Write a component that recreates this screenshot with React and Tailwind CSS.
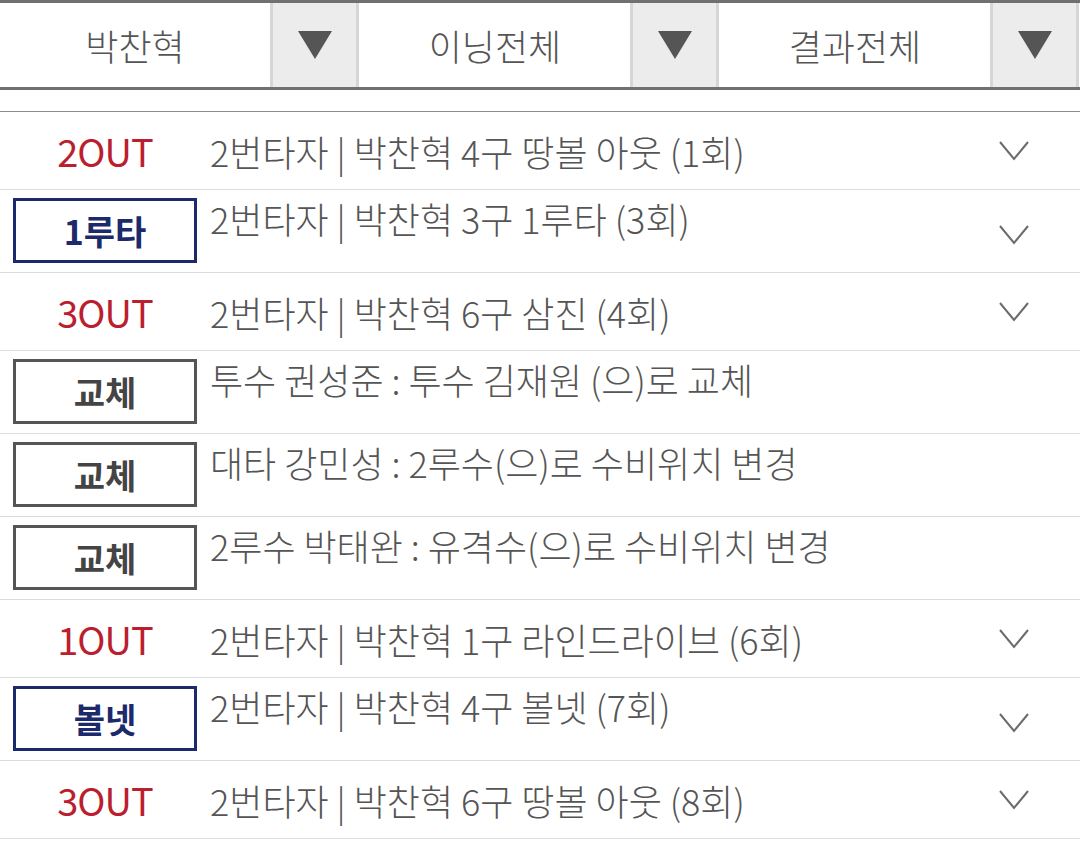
import React from 'react';

const rows = [
  { type: 'out', label: '2OUT', text: '2번타자 | 박찬혁 4구 땅볼 아웃 (1회)', more: true },
  { type: 'hit', label: '1루타', text: '2번타자 | 박찬혁 3구 1루타 (3회)', more: true },
  { type: 'out', label: '3OUT', text: '2번타자 | 박찬혁 6구 삼진 (4회)', more: true },
  { type: 'sub', label: '교체', text: '투수 권성준 : 투수 김재원 (으)로 교체' },
  { type: 'sub', label: '교체', text: '대타 강민성 : 2루수(으)로 수비위치 변경' },
  { type: 'sub', label: '교체', text: '2루수 박태완 : 유격수(으)로 수비위치 변경' },
  { type: 'out', label: '1OUT', text: '2번타자 | 박찬혁 1구 라인드라이브 (6회)', more: true },
  { type: 'hit', label: '볼넷', text: '2번타자 | 박찬혁 4구 볼넷 (7회)', more: true },
  { type: 'out', label: '3OUT', text: '2번타자 | 박찬혁 6구 땅볼 아웃 (8회)', more: true },
];

const filters = ['박찬혁', '이닝전체', '결과전체'];

const Chevron = () => (
  <svg width="32" height="24" viewBox="0 0 32 24" fill="none">
    <path d="M2 3 L16 20 L30 3" stroke="#6b6b6b" strokeWidth="2" />
  </svg>
);

const Badge = ({ row }) => {
  if (row.type === 'out') {
    return (
      <div className="w-[184px] flex justify-center text-[38px] leading-none tracking-[-1px] text-[#bb1f2f]">
        {row.label}
      </div>
    );
  }
  const tone = row.type === 'hit'
    ? 'border-[#1c2a6b] text-[#1c2a6b]'
    : 'border-[#555555] text-[#444444]';
  return (
    <div className={`w-[184px] h-[65px] border-[3px] flex items-center justify-center text-[34px] font-bold ${tone}`}>
      {row.label}
    </div>
  );
};

export default function App() {
  return (
    <div className="w-[1080px] h-[856px] bg-white overflow-hidden text-[#555555] font-['Noto_Sans_CJK_KR','Noto_Sans',sans-serif]">
      {/* filter bar */}
      <div className="flex border-t-[3px] border-b-[3px] border-[#707070] h-[90px]">
        {filters.map((f) => (
          <div key={f} className="flex w-[360px]">
            <div className="flex-1 flex items-center justify-center text-[36px] font-light">{f}</div>
            <div className="w-[89px] mr-[1px] bg-[#ececec] border-x-[3px] border-[#d6d6d6] flex items-center justify-center">
              <svg width="34" height="28" viewBox="0 0 34 28">
                <path d="M0 0 H34 L17 28 Z" fill="#555555" />
              </svg>
            </div>
          </div>
        ))}
      </div>

      {/* play list */}
      <div className="mt-[21px] border-t border-[#8c8c8c]">
        {rows.map((row, i) => (
          <div
            key={i}
            className={`flex border-b border-[#dcdcdc] ${row.type === 'out' ? 'h-[78px] items-center' : 'h-[83px] items-start pt-[8px]'}`}
          >
            <div className="w-[210px] pl-[13px] shrink-0 flex items-center">
              <Badge row={row} />
            </div>
            <div className="flex-1 text-[36px] leading-[40px] font-light whitespace-nowrap">
              {row.text}
            </div>
            <div className="w-[82px] shrink-0 flex justify-start self-center">
              {row.more && <Chevron />}
            </div>
          </div>
        ))}
      </div>
    </div>
  );
}
